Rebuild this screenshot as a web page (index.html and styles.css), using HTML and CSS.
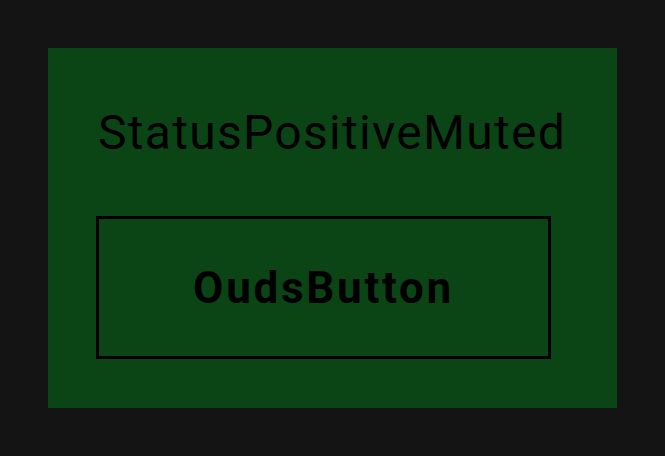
FILE: index.html
```html
<!DOCTYPE html>
<html>
<head>
<meta charset="utf-8">
<link rel="stylesheet" href="styles.css">
</head>
<body>
<div class="box">
  <div class="title">StatusPositiveMuted</div>
  <div class="button"><span class="label">OudsButton</span></div>
</div>
</body>
</html>
```
FILE: styles.css
```css
html, body {
  margin: 0;
  padding: 0;
  background: #141414;
}
body {
  padding: 48px;
  width: 665px;
  height: 456px;
  box-sizing: border-box;
  font-family: Roboto, "Noto Sans", sans-serif;
}
.box {
  width: 569px;
  height: 360px;
  background: #0b4516;
  box-sizing: border-box;
  padding: 0 48px;
  display: flex;
  flex-direction: column;
}
.title {
  margin-top: 61px;
  height: 48px;
  line-height: 48px;
  font-size: 48px;
  letter-spacing: 1.3px;
  color: #000;
  margin-left: 2px;
  white-space: nowrap;
}
.button {
  margin-top: 59px;
  width: 455px;
  height: 143px;
  box-sizing: border-box;
  border: 3px solid #000;
  display: flex;
  align-items: center;
  justify-content: center;
}
.label {
  font-weight: 700;
  font-size: 44px;
  letter-spacing: 2.7px;
  color: #000;
}
```
